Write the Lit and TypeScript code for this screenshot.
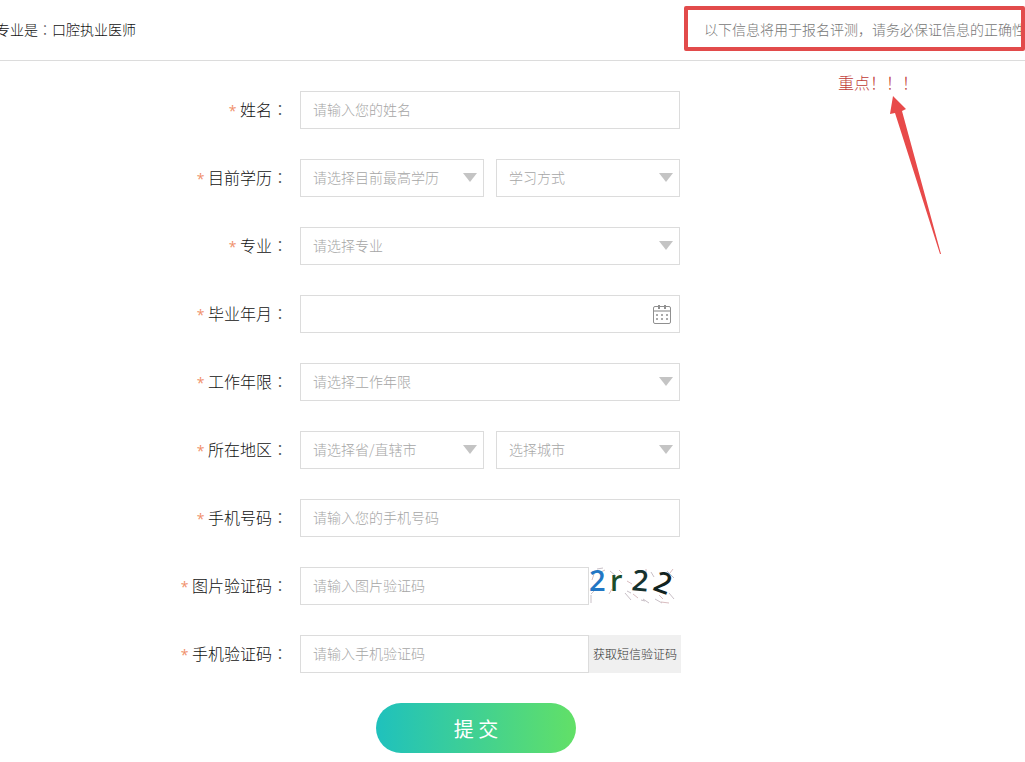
import { LitElement, html, css, svg } from "lit";
import { customElement } from "lit/decorators.js";

const NOISE = [
  "M3 13l2 -6", "M2 28v8M5 24l-3 3", "M16 3l-4 2", "M21 4l6 5", "M30 3l3 3", "M36 26l6 7M38 24l4 2",
  "M38 14l5 3", "M54 32l6 4M52 33l4 1", "M57 2v4", "M66 32l7 4", "M72 35l8 1", "M80 26l5 6",
  "M84 2l-3 4", "M78 4l7 7", "M23 22l-3 5", "M62 5l3 5", "M44 27l5 4", "M8 2l6 -1", "M70 28l4 4",
];

@customElement("app-root")
export class AppRoot extends LitElement {
  static styles = css`
    :host {
      display: block;
      position: relative;
      overflow: hidden;
      min-height: 100vh;
      background: #fff;
      color: #333;
      font-family: "Noto Sans CJK SC", sans-serif;
      font-size: 14px;
    }
    * { box-sizing: border-box; }
    .punct { font-family: "Noto Sans CJK TC", sans-serif; font-weight: 300; color: #555; }
    .top {
      display: flex;
      justify-content: space-between;
      height: 61px;
      line-height: 58px;
      border-bottom: 1px solid #dcdcdc;
      white-space: nowrap;
    }
    .major { margin: 0 0 0 -4px; font-size: 14px; font-weight: 300; color: #111; }
    .notice { margin: 0 -1px 0 0; color: #777; font-weight: 300; }
    .frame {
      position: absolute;
      top: 6px;
      right: 0;
      width: 341px;
      height: 45px;
      border: 4px solid #e24b4b;
      border-radius: 2px;
    }
    .mark {
      position: absolute;
      top: 70px;
      right: 107px;
      width: 80px;
      margin: 0;
      line-height: 24px;
      font-size: 16px;
      font-weight: 300;
      color: #c03a36;
      white-space: nowrap;
    }
    .arrow { position: absolute; top: 94px; right: 80px; width: 56px; height: 162px; }
    form { padding-top: 30px; }
    .row {
      display: grid;
      grid-template-columns: 288px 380px;
      column-gap: 12px;
      margin-bottom: 30px;
    }
    .label {
      height: 38px;
      line-height: 36px;
      font-size: 16px;
      font-weight: 300;
      text-align: right;
      color: #111;
    }
    .star { color: #f0906c; font-family: "Open Sans", sans-serif; font-size: 14px; font-weight: 400; }
    .field { display: flex; gap: 12px; }
    .joined { gap: 0; }
    .box { position: relative; flex: 1; min-width: 0; }
    .ctl {
      display: block;
      width: 100%;
      height: 38px;
      margin: 0;
      padding: 0 12px 2px;
      border: 1px solid #dcdcdc;
      border-radius: 0;
      outline: 0;
      background: #fff;
      appearance: none;
      font: 300 14px "Noto Sans CJK SC", sans-serif;
      color: #a6a6a6;
    }
    .ctl::placeholder { color: #a6a6a6; opacity: 1; }
    .tri {
      position: absolute;
      right: 7px;
      top: 14px;
      width: 14px;
      height: 9px;
      pointer-events: none;
    }
    .cal { position: absolute; right: 8px; top: 9px; width: 20px; height: 20px; }
    .side { flex: none; width: 91px; }
    .captcha { display: block; width: 91px; height: 38px; overflow: visible; }
    .sms {
      flex: none;
      width: 92px;
      height: 38px;
      margin-right: -1px;
      padding: 0 0 2px;
      border: 0;
      background: #f0f0f0;
      color: #333;
      font: 300 12px "Noto Sans CJK SC", sans-serif;
    }
    .submit {
      display: block;
      width: 200px;
      height: 50px;
      margin-left: 376px;
      padding: 0;
      border: 0;
      border-radius: 25px;
      background: linear-gradient(90deg, #1fc1bd, #62e067);
      color: #fff;
      font: 400 20px "Noto Sans CJK SC", sans-serif;
    }
  `;

  private row(id: string, label: string, content: unknown, joined = false) {
    return html`<div class="row">
      <label class="label" for=${id}><span class="star">*</span> ${label}<span class="punct" lang="zh-TW">：</span></label>
      <div class="field ${joined ? "joined" : ""}">${content}</div>
    </div>`;
  }

  private input(id: string, hint: string) {
    return html`<div class="box"><input class="ctl" id=${id} placeholder=${hint} /></div>`;
  }

  private select(id: string, hint: string) {
    return html`<div class="box">
      <select class="ctl" id=${id} aria-label=${hint}><option>${hint}</option></select>
      <svg class="tri" viewBox="0 0 14 9"><path d="M0 0h14L7 9z" fill="#c4c4c4" /></svg>
    </div>`;
  }

  render() {
    return html`
      <header class="top">
        <h1 class="major">专业是<span class="punct" lang="zh-TW">：</span>口腔执业医师</h1>
        <p class="notice">以下信息将用于报名评测，请务必保证信息的正确性</p>
      </header>
      <form>
        ${this.row("name", "姓名", this.input("name", "请输入您的姓名"))}
        ${this.row("degree", "目前学历", [this.select("degree", "请选择目前最高学历"), this.select("mode", "学习方式")])}
        ${this.row("subject", "专业", this.select("subject", "请选择专业"))}
        ${this.row("graduated", "毕业年月", html`<div class="box">
          <input class="ctl" id="graduated" />
          <svg class="cal" viewBox="0 0 20 20" fill="none" stroke="#909090">
            <rect x="1.5" y="2.5" width="17" height="17" rx="1.5" />
            <path d="M2 7h16" stroke="#c0c0c0" stroke-width="2" />
            <path d="M7 1v4M13 1v4" stroke-width="2" />
            <path d="M4 11h2m3 0h2m3 0h2M4 15h2m3 0h2m3 0h2" stroke-width="2" stroke="#aaa" />
          </svg>
        </div>`)}
        ${this.row("years", "工作年限", this.select("years", "请选择工作年限"))}
        ${this.row("province", "所在地区", [this.select("province", "请选择省/直辖市"), this.select("city", "选择城市")])}
        ${this.row("phone", "手机号码", this.input("phone", "请输入您的手机号码"))}
        ${this.row("captcha", "图片验证码", [this.input("captcha", "请输入图片验证码"), html`<div class="side">
          <svg class="captcha" viewBox="0 0 91 38" font-family="Open Sans" font-size="29" font-weight="600">
            ${NOISE.map((d, i) => svg`<path d=${d} fill="none" stroke=${i % 2 ? "#c9c0c7" : "#d9bdc0"} stroke-width="1" />`)}
            <text x="0" y="24" fill="#2277c4">2</text>
            <text x="21" y="24" font-size="29" fill="#1d4d28">r</text>
            <text x="43" y="24" fill="#16322f" transform="rotate(6 51 14)">2</text>
            <text x="66" y="26" fill="#122320" transform="rotate(20 74 15)">2</text>
          </svg>
        </div>`], true)}
        ${this.row("code", "手机验证码", [this.input("code", "请输入手机验证码"), html`<button class="sms" type="button">获取短信验证码</button>`], true)}
        <button class="submit" type="button">提 交</button>
      </form>
      <div class="frame"></div>
      <p class="mark">重点！！！</p>
      <svg class="arrow" viewBox="0 0 56 162"><path d="M4 2L17 15L13 17L52 160L51 160L6 19L1 20z" fill="#e84a4a" /></svg>
    `;
  }
}
